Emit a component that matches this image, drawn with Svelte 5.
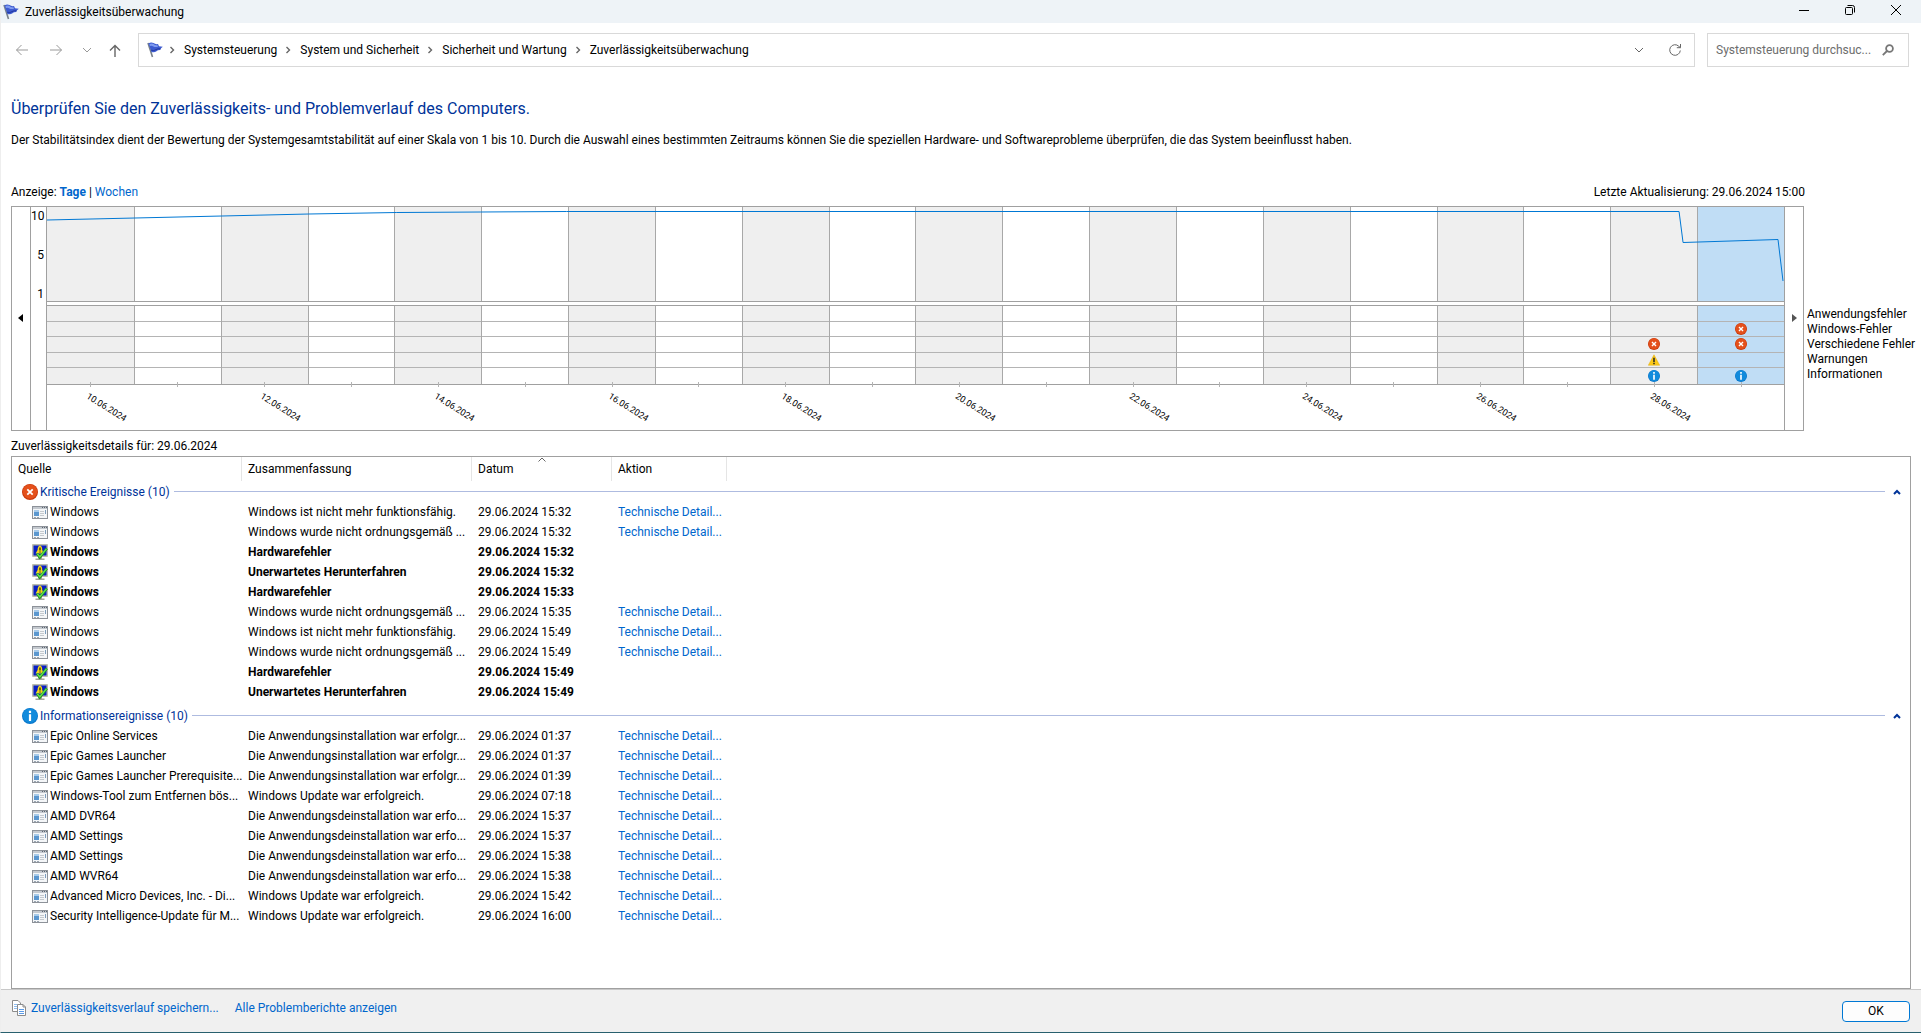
<script lang="ts">
  type Event = {
    source: string
    summary: string
    date: string
    /** Unresolved problems get the monitor icon, bold text and no action link. */
    critical?: boolean
  }

  type Group = {
    title: string
    kind: 'error' | 'info'
    events: Event[]
  }

  const DETAILS = 'Technische Detail...'
  const NOT_WORKING = 'Windows ist nicht mehr funktionsfähig.'
  const BAD_SHUTDOWN = 'Windows wurde nicht ordnungsgemäß ...'
  const INSTALLED = 'Die Anwendungsinstallation war erfolgr...'
  const REMOVED = 'Die Anwendungsdeinstallation war erfo...'
  const UPDATED = 'Windows Update war erfolgreich.'

  const crumbs = [
    'Systemsteuerung',
    'System und Sicherheit',
    'Sicherheit und Wartung',
    'Zuverlässigkeitsüberwachung',
  ]

  const categories = [
    'Anwendungsfehler',
    'Windows-Fehler',
    'Verschiedene Fehler',
    'Warnungen',
    'Informationen',
  ]

  // One entry per day, 10.06. to 29.06.; marks follow the order of `categories`.
  const days = Array.from({ length: 20 }, (_, i) => ({
    date: `${10 + i}.06.2024`,
    marks: ['', '', '', '', ''],
  }))
  days[18].marks = ['', '', 'error', 'warning', 'info']
  days[19].marks = ['', 'error', 'error', '', 'info']

  const groups: Group[] = [
    {
      title: 'Kritische Ereignisse (10)',
      kind: 'error',
      events: [
        { source: 'Windows', summary: NOT_WORKING, date: '29.06.2024 15:32' },
        { source: 'Windows', summary: BAD_SHUTDOWN, date: '29.06.2024 15:32' },
        { source: 'Windows', summary: 'Hardwarefehler', date: '29.06.2024 15:32', critical: true },
        { source: 'Windows', summary: 'Unerwartetes Herunterfahren', date: '29.06.2024 15:32', critical: true },
        { source: 'Windows', summary: 'Hardwarefehler', date: '29.06.2024 15:33', critical: true },
        { source: 'Windows', summary: BAD_SHUTDOWN, date: '29.06.2024 15:35' },
        { source: 'Windows', summary: NOT_WORKING, date: '29.06.2024 15:49' },
        { source: 'Windows', summary: BAD_SHUTDOWN, date: '29.06.2024 15:49' },
        { source: 'Windows', summary: 'Hardwarefehler', date: '29.06.2024 15:49', critical: true },
        { source: 'Windows', summary: 'Unerwartetes Herunterfahren', date: '29.06.2024 15:49', critical: true },
      ],
    },
    {
      title: 'Informationsereignisse (10)',
      kind: 'info',
      events: [
        { source: 'Epic Online Services', summary: INSTALLED, date: '29.06.2024 01:37' },
        { source: 'Epic Games Launcher', summary: INSTALLED, date: '29.06.2024 01:37' },
        { source: 'Epic Games Launcher Prerequisite...', summary: INSTALLED, date: '29.06.2024 01:39' },
        { source: 'Windows-Tool zum Entfernen bös...', summary: UPDATED, date: '29.06.2024 07:18' },
        { source: 'AMD DVR64', summary: REMOVED, date: '29.06.2024 15:37' },
        { source: 'AMD Settings', summary: REMOVED, date: '29.06.2024 15:37' },
        { source: 'AMD Settings', summary: REMOVED, date: '29.06.2024 15:38' },
        { source: 'AMD WVR64', summary: REMOVED, date: '29.06.2024 15:38' },
        { source: 'Advanced Micro Devices, Inc. - Di...', summary: UPDATED, date: '29.06.2024 15:42' },
        { source: 'Security Intelligence-Update für M...', summary: UPDATED, date: '29.06.2024 16:00' },
      ],
    },
  ]

  let selected = $state(19)
  let collapsed = $state([false, false])
</script>

{#snippet flag()}
  <svg class="flag" width="16" height="16" viewBox="0 0 16 16" aria-hidden="true">
    <path d="M1 1 L5.5 15" stroke="#77808a" stroke-width="1.6" fill="none" />
    <path d="M1.4 1.4 Q4 -0.4 6.5 1 Q8.5 2.6 11 2 L12 4.2 L15.8 4.8 Q13.6 6.4 13.2 8 Q10.5 8 9.5 9.2 Q7.5 10.8 4.4 10 Z" fill="#3d5bd0" />
    <path d="M2.4 2.2 Q4.2 1 6.2 1.8 Q8.5 3.8 10.5 3.2 L11 4.8 Q8 5.6 6 4.2 Q4.6 3.4 3 4 Z" fill="#7f9bf0" />
    <path d="M4.2 8.2 Q7 9.2 9 7.6 Q11 6.4 13.4 6.8" stroke="#2338a0" fill="none" />
  </svg>
{/snippet}

{#snippet mark(kind: string, size: number)}
  <svg width={size} height={size} viewBox="0 0 16 16" role="img" aria-label={kind}>
    {#if kind === 'error'}
      <circle cx="8" cy="8" r="8" fill="#c9380a" />
      <circle cx="8" cy="7.6" r="7.2" fill="#e4501b" />
      <path d="M5.3 5.3 L10.7 10.7 M10.7 5.3 L5.3 10.7" stroke="#fff" stroke-width="1.8" />
    {:else if kind === 'warning'}
      <path d="M8 1 L15.6 15 H0.4 Z" fill="#fcc917" stroke="#e0a800" stroke-width="0.6" stroke-linejoin="round" />
      <path d="M8 5 V10.6 M8 11.8 V13.8" stroke="#222" stroke-width="2" />
    {:else}
      <circle cx="8" cy="8" r="8" fill="#0a78cc" />
      <circle cx="8" cy="7.6" r="7.2" fill="#128bdc" />
      <path d="M8 2.8 V5 M8 6.2 V13" stroke="#fff" stroke-width="2.2" />
    {/if}
  </svg>
{/snippet}

{#snippet appIcon()}
  <svg width="16" height="16" viewBox="0 0 16 16" aria-hidden="true">
    <rect x="0.5" y="2.5" width="15" height="12" fill="#f4f6f8" stroke="#8d9299" />
    <rect x="1" y="3" width="14" height="2" fill="#c3c8ce" />
    <path d="M10 3.5 h1 M12 3.5 h1 M14 3.5 h1" stroke="#5c6670" />
    <rect x="2" y="6" width="5" height="6" fill="#a8cbea" />
    <rect x="2" y="8" width="5" height="4" fill="#5b97cf" />
    <path d="M8 7.5 h4 M8 9.5 h4 M8 11.5 h4" stroke="#c4c9ce" />
    <path d="M13.5 6 v4" stroke="#7c9cbc" />
    <path d="M2 13.5 h2 M5 13.5 h2" stroke="#9aa5b0" />
  </svg>
{/snippet}

{#snippet monitorIcon()}
  <svg width="16" height="16" viewBox="0 0 16 16" aria-hidden="true">
    <rect x="0" y="0" width="16" height="13" rx="1" fill="#b9bcae" />
    <rect x="1.5" y="1.5" width="13" height="10" fill="#0a1fc4" />
    <path d="M6 13 h4 v1.5 h2.5 v1.5 h-9 v-1.5 h2.5 z" fill="#a3a69b" />
    <path d="M8 1.4 Q10.4 2 10.2 6 L12 9.6 H3.6 L5.6 6 Q5.6 2 8 1.4 Z" fill="#f4d71c" />
    <path d="M8 3.4 V6.4 M8 7.4 V8.6" stroke="#222" stroke-width="1.3" />
    <path d="M5 9.6 L7.8 13.4 L14.8 4.4" stroke="#1d8a1d" stroke-width="2.6" fill="none" />
    <path d="M5.3 9.8 L7.8 12.8 L14.5 4.8" stroke="#5fe04a" stroke-width="1.4" fill="none" />
  </svg>
{/snippet}

<div class="window">
  <header class="titlebar">
    {@render flag()}
    <span class="title">Zuverlässigkeitsüberwachung</span>
    <button type="button" class="caption" aria-label="Minimieren">
      <svg width="12" height="12" viewBox="0 0 12 12"><path d="M1 6.5 H11" /></svg>
    </button>
    <button type="button" class="caption" aria-label="Verkleinern">
      <svg width="12" height="12" viewBox="0 0 12 12">
        <rect x="1.5" y="3.5" width="7" height="7" rx="1" />
        <path d="M3.5 1.5 H8.5 Q10.5 1.5 10.5 3.5 V8.5" />
      </svg>
    </button>
    <button type="button" class="caption" aria-label="Schließen">
      <svg width="12" height="12" viewBox="0 0 12 12"><path d="M1 1 L11 11 M11 1 L1 11" /></svg>
    </button>
  </header>

  <nav class="toolbar">
    <div class="history">
      <button type="button" class="tool faded" aria-label="Zurück">
        <svg width="14" height="12" viewBox="0 0 14 12"><path d="M13 6 H1.5 M6.5 1 L1.5 6 L6.5 11" /></svg>
      </button>
      <button type="button" class="tool faded" aria-label="Vorwärts">
        <svg width="14" height="12" viewBox="0 0 14 12"><path d="M1 6 H12.5 M7.5 1 L12.5 6 L7.5 11" /></svg>
      </button>
      <button type="button" class="tool small faded" aria-label="Verlauf">
        <svg width="10" height="6" viewBox="0 0 10 6"><path d="M1 1 L5 5 L9 1" /></svg>
      </button>
      <button type="button" class="tool small up" aria-label="Nach oben">
        <svg width="12" height="13" viewBox="0 0 12 13"><path d="M6 13 V1.5 M1 6.5 L6 1.5 L11 6.5" /></svg>
      </button>
    </div>
    <div class="address">
      {@render flag()}
      {#each crumbs as crumb}
        <svg class="sep" width="6" height="8" viewBox="0 0 6 8" aria-hidden="true"><path d="M1.5 1 L4.5 4 L1.5 7" /></svg>
        <a href="#top">{crumb}</a>
      {/each}
      <button type="button" class="tool end" aria-label="Vorherige Orte">
        <svg width="10" height="6" viewBox="0 0 10 6"><path d="M1 1 L5 5 L9 1" /></svg>
      </button>
      <button type="button" class="tool" aria-label="Aktualisieren">
        <svg width="14" height="14" viewBox="0 0 14 14">
          <path d="M12.3 7.5 A5.3 5.3 0 1 1 10.8 3.3 L12.3 4.6 M12.5 1 V4.7 H8.8" />
        </svg>
      </button>
    </div>
    <div class="search">
      <input type="text" aria-label="Suchen" placeholder="Systemsteuerung durchsuc..." />
      <svg width="12" height="12" viewBox="0 0 12 12" aria-hidden="true">
        <circle cx="7.5" cy="4.5" r="3.4" />
        <path d="M5 7 L0.8 11.2" />
      </svg>
    </div>
  </nav>

  <main>
    <h1>Überprüfen Sie den Zuverlässigkeits- und Problemverlauf des Computers.</h1>
    <p class="intro">
      Der Stabilitätsindex dient der Bewertung der Systemgesamtstabilität auf einer Skala von 1 bis 10. Durch die
      Auswahl eines bestimmten Zeitraums können Sie die speziellen Hardware- und Softwareprobleme überprüfen, die das
      System beeinflusst haben.
    </p>

    <div class="viewbar">
      <span>Anzeige: <a href="#days" class="current">Tage</a> | <a href="#weeks">Wochen</a></span>
      <span>Letzte Aktualisierung: 29.06.2024 15:00</span>
    </div>

    <section class="history-chart">
      <div class="chart">
        <button type="button" class="scroll" aria-label="Zurückblättern">
          <svg width="5" height="8" viewBox="0 0 5 8"><path d="M5 0 V8 L0 4 Z" fill="#000" /></svg>
        </button>
        <div class="axis">
          <span>10</span>
          <span>5</span>
          <span>1</span>
        </div>
        <div class="plot">
          <div class="index">
            {#each days as day, i}
              <button type="button" class="day" class:selected={i === selected} aria-label={day.date} onclick={() => (selected = i)}></button>
            {/each}
            <svg class="curve" viewBox="0 0 1738 94" preserveAspectRatio="none" aria-hidden="true">
              <polyline points="0,13 88,11 175,9 262,7 350,5.5 434,5 520,4.5 1633,4.5 1637,35.5 1732,32.5 1737,74" />
            </svg>
          </div>
          <div class="marks">
            {#each days as day, i}
              <div class="day" class:selected={i === selected}>
                {#each day.marks as kind}
                  <span class="cell">
                    {#if kind}{@render mark(kind, 12)}{/if}
                  </span>
                {/each}
              </div>
            {/each}
          </div>
          <div class="dates">
            {#each days as day, i}
              <div class="date">
                {#if i % 2 === 0}<span>{day.date}</span>{/if}
              </div>
            {/each}
          </div>
        </div>
        <button type="button" class="scroll right" aria-label="Vorblättern">
          <svg width="5" height="8" viewBox="0 0 5 8"><path d="M0 0 V8 L5 4 Z" fill="#555" /></svg>
        </button>
      </div>
      <ul class="legend">
        {#each categories as category}
          <li>{category}</li>
        {/each}
      </ul>
    </section>

    <h2>Zuverlässigkeitsdetails für: 29.06.2024</h2>

    <div class="details">
      <table>
        <colgroup>
          <col class="c-source" />
          <col class="c-summary" />
          <col class="c-date" />
          <col class="c-action" />
          <col />
        </colgroup>
        <thead>
          <tr>
            <th scope="col">Quelle</th>
            <th scope="col">Zusammenfassung</th>
            <th scope="col" class="sorted" aria-sort="ascending">
              Datum
              <svg width="8" height="5" viewBox="0 0 8 5" aria-hidden="true"><path d="M0.5 4.5 L4 1 L7.5 4.5" /></svg>
            </th>
            <th scope="col">Aktion</th>
            <td></td>
          </tr>
        </thead>
        {#each groups as group, g}
          <tbody>
            <tr>
              <th class="group" colspan="5" scope="rowgroup">
                <div class="group-bar">
                  {@render mark(group.kind, 16)}
                  <span>{group.title}</span>
                  <i class="rule"></i>
                  <button type="button" aria-label="Gruppe reduzieren" onclick={() => (collapsed[g] = !collapsed[g])}>
                    <svg width="8" height="6" viewBox="0 0 8 6"><path d="M1 5 L4 2 L7 5" /></svg>
                  </button>
                </div>
              </th>
            </tr>
            {#if !collapsed[g]}
              {#each group.events as event}
                <tr class:critical={event.critical}>
                  <td class="source">
                    <div class="source-cell">
                      {#if event.critical}{@render monitorIcon()}{:else}{@render appIcon()}{/if}
                      <span>{event.source}</span>
                    </div>
                  </td>
                  <td>{event.summary}</td>
                  <td>{event.date}</td>
                  <td>{#if !event.critical}<a href="#details">{DETAILS}</a>{/if}</td>
                  <td></td>
                </tr>
              {/each}
            {/if}
          </tbody>
        {/each}
      </table>
    </div>
  </main>

  <footer>
    <svg width="16" height="16" viewBox="0 0 16 16" aria-hidden="true">
      <path d="M1.5 0.5 H7 L9.5 3 V11.5 H1.5 Z" fill="#fff" stroke="#8c8c8c" />
      <path d="M3 4.5 H7 M3 6.5 H6 M3 8.5 H6" stroke="#8fbdf0" />
      <path d="M6.5 4.5 H12 L14.5 7 V15.5 H6.5 Z" fill="#fff" stroke="#8c8c8c" />
      <path d="M12 4.5 V7 H14.5" fill="none" stroke="#8c8c8c" />
      <path d="M8 9.5 H13 M8 11.5 H13 M8 13.5 H13" stroke="#5b9be8" />
    </svg>
    <a href="#save">Zuverlässigkeitsverlauf speichern...</a>
    <a href="#reports" class="reports">Alle Problemberichte anzeigen</a>
    <button type="button" class="ok">OK</button>
  </footer>
</div>

<style>
  :global(body) {
    margin: 0;
    background: #fff;
  }
  .window {
    display: flex;
    flex-direction: column;
    box-sizing: border-box;
    min-height: 100vh;
    border-left: 1px solid #eee;
    border-bottom: 1px solid #28606e;
    color: #000;
    font-family: Roboto, 'Segoe UI', sans-serif;
    font-size: 12px;
    line-height: 16px;
  }
  button {
    display: flex;
    align-items: center;
    justify-content: center;
    padding: 0;
    border: 0;
    background: none;
    color: inherit;
    font: inherit;
  }
  svg {
    display: block;
    flex: none;
  }
  a {
    color: #0066cc;
    text-decoration: none;
  }
  a:hover {
    text-decoration: underline;
  }

  /* Title bar */
  .titlebar {
    display: flex;
    align-items: center;
    height: 23px;
    padding: 0 2px;
    background: #eef3f7;
  }
  .title {
    flex: 1;
    padding-left: 6px;
  }
  .caption {
    width: 46px;
    height: 20px;
    align-self: flex-start;
  }
  .caption svg {
    fill: none;
    stroke: #000;
  }

  /* Navigation */
  .toolbar {
    display: flex;
    align-items: center;
    padding: 10px 12px 0 4px;
  }
  .history {
    display: flex;
    margin-right: 9px;
  }
  .tool {
    width: 34px;
    height: 32px;
  }
  .tool.small {
    width: 28px;
  }
  .tool svg,
  .sep {
    fill: none;
    stroke: #666;
  }
  .tool.faded svg {
    stroke: #999;
  }
  .up svg {
    stroke-width: 1.4;
  }
  .address,
  .search {
    display: flex;
    align-items: center;
    box-sizing: border-box;
    height: 34px;
    border: 1px solid #d9d9d9;
  }
  .address {
    flex: 1;
    margin-right: 12px;
    padding: 0 2px 0 8px;
  }
  .address a {
    color: #000;
  }
  .address .sep {
    margin: 0 9px 0 8px;
    stroke-width: 1.4;
  }
  .address .flag + .sep {
    margin-left: 6px;
  }
  .address .end {
    margin-right: 2px;
    margin-left: auto;
  }
  .search {
    width: 202px;
    padding: 0 14px 0 8px;
  }
  .search input {
    flex: 1;
    min-width: 0;
    padding: 0;
    border: 0;
    outline: 0;
    font: inherit;
  }
  .search input::placeholder {
    color: #6d6d6d;
    opacity: 1;
  }
  .search svg {
    fill: none;
    stroke: #777;
    stroke-width: 1.8;
  }

  /* Content */
  main {
    display: flex;
    flex: 1;
    flex-direction: column;
    padding: 31px 10px 0;
  }
  h1 {
    margin: 0;
    color: #003399;
    font-size: 16px;
    font-weight: 400;
    line-height: 22px;
  }
  .intro {
    margin: 12px 0 0;
  }
  .viewbar {
    display: flex;
    justify-content: space-between;
    margin-top: 36px;
    padding-right: 106px;
  }
  .current {
    font-weight: 700;
  }

  /* Chart */
  .history-chart {
    display: flex;
    margin-top: 6px;
  }
  .chart {
    display: flex;
    flex: 1;
    border: 1px solid #a0a0a0;
  }
  .scroll {
    width: 19px;
    border-right: 1px solid #a0a0a0;
    padding: 0 2px 2px 0;
  }
  .scroll.right {
    padding: 0 0 2px;
    border-right: 0;
    border-left: 1px solid #a0a0a0;
  }
  .axis {
    display: flex;
    flex-direction: column;
    justify-content: space-between;
    width: 13px;
    height: 94px;
    padding: 1px 2px 0 0;
    text-align: right;
  }
  .plot {
    flex: 1;
    border-left: 1px solid #a0a0a0;
  }
  .index,
  .marks,
  .dates {
    display: grid;
    grid-template-columns: repeat(20, 1fr);
  }
  .index {
    position: relative;
    height: 94px;
    border-bottom: 1px solid #a0a0a0;
  }
  .curve {
    position: absolute;
    inset: 0;
    width: 100%;
    height: 100%;
    pointer-events: none;
  }
  .curve polyline {
    fill: none;
    stroke: #0078d4;
    vector-effect: non-scaling-stroke;
  }
  .marks {
    height: 78px;
    margin-top: 3px;
    border-top: 1px solid #a0a0a0;
    border-bottom: 1px solid #a0a0a0;
  }
  .day {
    border-left: 1px solid #a8a8a8;
  }
  .marks .day {
    display: grid;
    grid-template-rows: repeat(5, 1fr);
  }
  .day:nth-of-type(odd) {
    background: #efefef;
  }
  .day:first-of-type {
    border-left: 0;
  }
  .day.selected {
    background: #c0ddf5;
  }
  .cell {
    display: flex;
    align-items: center;
    justify-content: center;
    min-height: 0;
    border-bottom: 1px solid #b4b4b4;
  }
  .cell:last-child {
    border-bottom: 0;
  }
  .dates {
    height: 45px;
  }
  .date {
    position: relative;
  }
  .date::before {
    position: absolute;
    top: -3px;
    left: 50%;
    width: 1px;
    height: 5px;
    background: #b4b4b4;
    content: '';
  }
  .date span {
    position: absolute;
    top: 6px;
    left: 50%;
    font-size: 9px;
    line-height: 10px;
    transform: rotate(32deg);
    transform-origin: left top;
  }
  .legend {
    width: 104px;
    margin: 101px 0 0;
    padding: 0 0 0 3px;
    list-style: none;
    line-height: 15px;
    white-space: nowrap;
  }
  h2 {
    margin: 7px 0 2px;
    font-size: 12px;
    font-weight: 400;
  }

  /* Event list */
  .details {
    flex: 1;
    border: 1px solid #a0a0a0;
  }
  table {
    width: 100%;
    border-collapse: separate;
    border-spacing: 0;
    table-layout: fixed;
  }
  .c-source,
  .c-summary {
    width: 230px;
  }
  .c-date {
    width: 140px;
  }
  .c-action {
    width: 115px;
  }
  th,
  td {
    padding: 0 0 0 6px;
    overflow: hidden;
    font-weight: 400;
    text-align: left;
    white-space: nowrap;
  }
  thead th {
    height: 24px;
    border-right: 1px solid #e5e5e5;
  }
  .sorted {
    position: relative;
  }
  .sorted svg {
    position: absolute;
    top: 0;
    left: calc(50% - 4px);
    fill: none;
    stroke: #666;
  }
  tbody td {
    height: 20px;
  }
  .group {
    height: 21px;
    padding: 0 7px 0 10px;
  }
  tbody + tbody .group {
    padding-top: 3px;
  }
  .group-bar {
    display: flex;
    align-items: center;
    color: #003399;
  }
  .group-bar span {
    padding: 0 4px 0 2px;
  }
  .rule {
    flex: 1;
    height: 1px;
    margin-right: 6px;
    background: #aebbe0;
  }
  .group-bar button {
    width: 12px;
    height: 16px;
  }
  .group-bar button svg {
    fill: none;
    stroke: #003399;
    stroke-width: 2;
  }
  td.source {
    padding-left: 20px;
  }
  .source-cell {
    display: flex;
    align-items: center;
    gap: 2px;
  }
  .critical td {
    font-weight: 700;
  }

  /* Footer */
  footer {
    display: flex;
    align-items: center;
    height: 42px;
    padding: 0 11px 0 10px;
    border-top: 1px solid #c8c8c8;
    background: #f0f0f0;
  }
  footer a {
    padding: 0 0 7px 4px;
  }
  footer svg {
    margin-bottom: 6px;
  }
  footer .reports {
    padding-left: 16px;
  }
  .ok {
    width: 68px;
    height: 21px;
    margin-left: auto;
    border: 1px solid #0078d4;
    border-radius: 4px;
    background: #fdfdfd;
  }
</style>
